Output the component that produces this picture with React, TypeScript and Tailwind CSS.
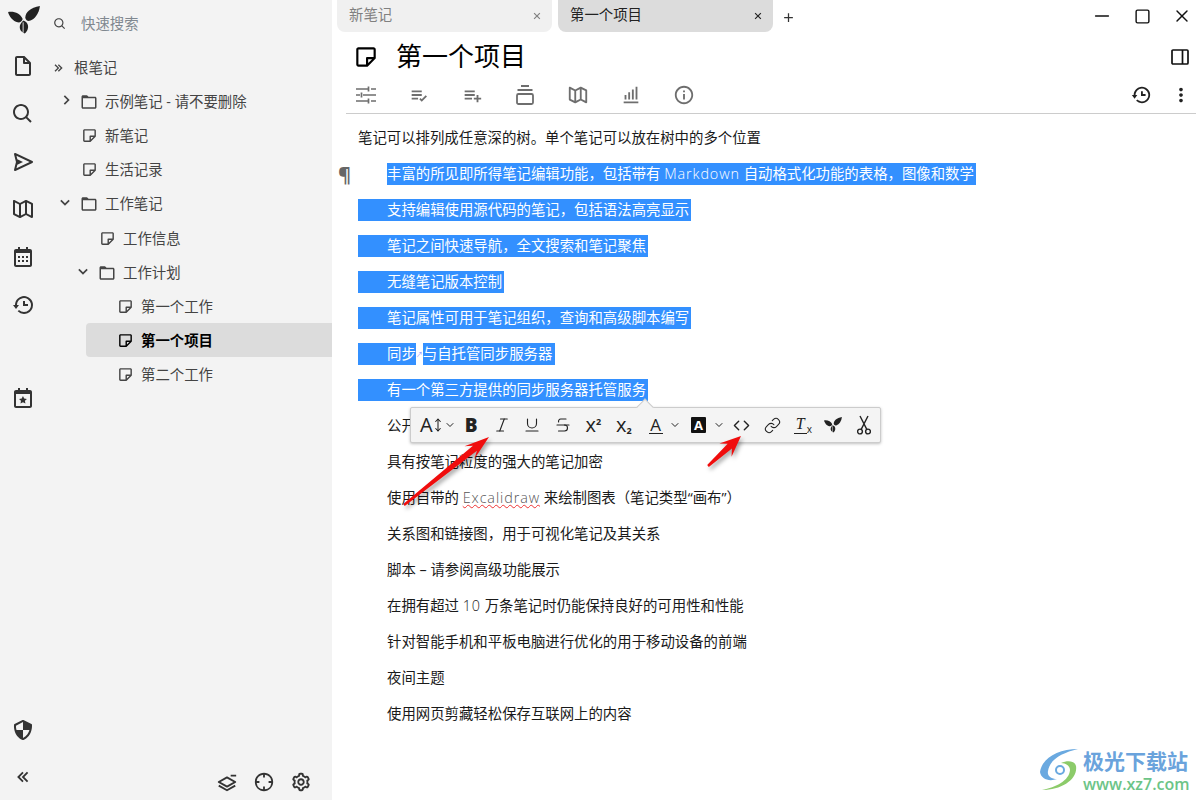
import React from 'react';
import {
  BiFileBlank, BiSearch, BiSend, BiMapAlt, BiCalendar, BiHistory, BiCalendarStar, BiShieldQuarter,
  BiChevronsLeft, BiChevronsRight, BiChevronRight, BiChevronDown, BiFolder, BiNote, BiLayerMinus,
  BiCrosshair, BiCog, BiListCheck, BiListPlus, BiBarChartAlt, BiInfoCircle, BiDotsVerticalRounded,
  BiX, BiPlus,
} from 'react-icons/bi';
import {
  Italic, Underline, Strikethrough, Code, Link,
  ChevronDown, MoveVertical, Minus, Square, X,
} from 'lucide-react';

const font = { fontFamily: '"Open Sans", "Noto Sans CJK SC", sans-serif' };

const Leaf = ({ size = 38 }: { size?: number }) => (
  <svg width={size} height={size * 0.86} viewBox="0 0 37 32" fill="currentColor">
    <path d="M17 15C14 9 8 6 0 7c1 5 6 11 11 12 3 .6 5-1 6-4z" />
    <path d="M20 14c0-7 6-12 17-14-1 9-6 15-11 17-3 1-5 0-6-3z" />
    <path d="M18 17c-4 3-6 8-3 12l4 3c3-2 5-6 4-10-1-3-3-4-5-5z" />
    <path d="M17.5 19v12" stroke="#f3f3f3" strokeWidth="1" />
  </svg>
);

const tree = [
  { label: '示例笔记 - 请不要删除', pad: 'pl-[81px]', chevron: 'right', icon: 'folder' },
  { label: '新笔记', pad: 'pl-[81px]', icon: 'note' },
  { label: '生活记录', pad: 'pl-[81px]', icon: 'note' },
  { label: '工作笔记', pad: 'pl-[81px]', chevron: 'down', icon: 'folder', tall: true },
  { label: '工作信息', pad: 'pl-[99px]', icon: 'note' },
  { label: '工作计划', pad: 'pl-[99px]', chevron: 'down', icon: 'folder' },
  { label: '第一个工作', pad: 'pl-[117px]', icon: 'note' },
  { label: '第一个项目', pad: 'pl-[117px]', icon: 'note', active: true },
  { label: '第二个工作', pad: 'pl-[117px]', icon: 'note' },
];

const railIcons = [BiFileBlank, BiSearch, BiSend, BiMapAlt, BiCalendar, BiHistory];

const TuneIcon = () => (
  <svg width="22" height="22" viewBox="0 0 22 22" fill="none" stroke="currentColor" strokeWidth="1.7">
    <path d="M1 5h12M16 5h5M13.5 2.5v5M1 11h4M8 11h13M6.5 8.5v5M1 17h12M16 17h5M13.5 14.5v5" />
  </svg>
);

const DockIcon = () => (
  <svg width="22" height="22" viewBox="0 0 22 22" fill="none" stroke="currentColor" strokeWidth="1.8">
    <path d="M7 2h8M3.5 6h15" />
    <rect x="3" y="10" width="16" height="10" rx="1.5" />
  </svg>
);

const toolIcons = [TuneIcon, BiListCheck, BiListPlus, DockIcon, BiMapAlt, BiBarChartAlt, BiInfoCircle];

const Latin = ({ children }: { children: React.ReactNode }) => (
  <span className="font-light tracking-[0.9px]">{children}</span>
);

const selected: React.ReactNode[] = [
  <>丰富的所见即所得笔记编辑功能，包括带有 <Latin>Markdown</Latin> 自动格式化功能的表格，图像和数学</>,
  '支持编辑使用源代码的笔记，包括语法高亮显示',
  '笔记之间快速导航，全文搜索和笔记聚焦',
  '无缝笔记版本控制',
  '笔记属性可用于笔记组织，查询和高级脚本编写',
];

const plain: React.ReactNode[] = [
  '公开',
  '具有按笔记粒度的强大的笔记加密',
  <span>
    使用自带的{' '}
    <span className="underline decoration-wavy decoration-[#e33] decoration-1 text-[#555] font-light tracking-[0.9px]">Excalidraw</span>
    {' '}来绘制图表（笔记类型“画布”）
  </span>,
  '关系图和链接图，用于可视化笔记及其关系',
  '脚本 – 请参阅高级功能展示',
  <span>在拥有超过 <Latin>10</Latin> 万条笔记时仍能保持良好的可用性和性能</span>,
  '针对智能手机和平板电脑进行优化的用于移动设备的前端',
  '夜间主题',
  '使用网页剪藏轻松保存互联网上的内容',
];

const Sidebar = () => (
  <aside className="w-[332px] shrink-0 h-full bg-[#f3f3f3] flex text-[#444]">
    <div className="w-[47px] shrink-0 flex flex-col items-center pt-[6px] pb-[12px]">
      <div className="text-[#222] h-[36px]"><Leaf size={32} /></div>
      <div className="flex flex-col gap-[23.8px] mt-[12px] text-[#333] -translate-x-[1px]">
        {railIcons.map((Icon, i) => <Icon key={i} size={24} />)}
      </div>
      <BiCalendarStar size={24} className="mt-[69px] text-[#333] -translate-x-[1px]" />
      <BiShieldQuarter size={24} className="mt-auto text-[#333] -translate-x-[1px]" />
      <BiChevronsLeft size={22} className="mt-[24px] text-[#333] -translate-x-[1px]" />
    </div>
    <div className="flex-1 flex flex-col">
      <div className="h-[48px] flex items-center pl-[6px] gap-[14px]">
        <BiSearch size={14} className="text-[#444]" />
        <span className="text-[14.4px] text-[#808890]">快速搜索</span>
      </div>
      <div className="flex items-center h-[34px] mt-[3px] pl-[4px] text-[14.4px]">
        <BiChevronsRight size={16} />
        <span className="ml-[7px]">根笔记</span>
      </div>
      <div className="-ml-[47px] relative">
        {tree.map((row, i) => (
          <div
            key={i}
            className={`flex items-center text-[14.4px] relative ${row.tall ? 'h-[35px] pb-[1px]' : 'h-[34px]'} ${row.pad} ${
              row.active ? 'font-bold text-black' : ''
            }`}
          >
            {row.active && <div className="absolute left-[86px] right-0 top-[-1px] bottom-[1px] bg-[#dcdcdc] rounded-l-[4px]" />}
            <span className="relative flex items-center">
              {row.chevron === 'right' && <BiChevronRight size={20} className="absolute -left-[25px] top-[-1px]" />}
              {row.chevron === 'down' && <BiChevronDown size={20} className="absolute -left-[26px] top-[-1px]" />}
              {row.icon === 'folder' ? <BiFolder size={18} className="ml-[-1px]" /> : <BiNote size={17} />}
              <span className="ml-[7px]">{row.label}</span>
            </span>
          </div>
        ))}
      </div>
      <div className="mt-auto pb-[7px] flex justify-end pr-[20px] gap-[15px] text-[#333]">
        <BiLayerMinus size={22} />
        <BiCrosshair size={22} />
        <BiCog size={22} />
      </div>
    </div>
  </aside>
);

const Tabs = () => (
  <div className="h-[32px] flex items-stretch pl-[5px] relative">
    <div className="w-[215px] bg-[#f0f0f0] rounded-b-[8px] flex items-center justify-between pl-[12px] pr-[8px] text-[14.4px] text-[#808080]">
      <span className="pb-[3px]">新笔记</span>
      <BiX size={14} />
    </div>
    <div className="ml-[6px] w-[215px] bg-[#dcdcdc] rounded-b-[8px] flex items-center justify-between pl-[12px] pr-[8px] text-[14.4px] text-[#222]">
      <span className="pb-[3px]">第一个项目</span>
      <BiX size={14} />
    </div>
    <BiPlus size={15} className="ml-[8px] mt-[10px] text-[#333]" />
    <div className="ml-auto -mr-[2px] flex items-center text-[#111]">
      <div className="w-[40px] flex justify-center"><Minus size={22} strokeWidth={1.5} /></div>
      <div className="w-[40px] flex justify-center"><Square size={17} strokeWidth={2} /></div>
      <div className="w-[40px] flex justify-center"><X size={20} strokeWidth={1.7} /></div>
    </div>
  </div>
);

const Selected = ({ children, first }: { children: React.ReactNode; first?: boolean }) => (
  <div className={`h-[36px] flex items-center ${first ? 'pl-[29px]' : ''}`}>
    <span className={`bg-[#3390ff] text-white h-[22px] flex items-center whitespace-pre pr-[2px] ${first ? '' : 'pl-[29px]'}`}>
      <span>{children}</span>
    </span>
  </div>
);

const Content = () => (
  <main className="flex-1 min-w-0 h-full flex flex-col">
    <Tabs />
    <div className="h-[50px] flex items-center pl-[21px] pr-[11px]">
      <BiNote size={26} className="text-black" />
      <h1 className="ml-[17px] text-[26px] text-black pb-[1px]">第一个项目</h1>
      <svg width="18" height="16" viewBox="0 0 18 16" fill="none" stroke="#111" strokeWidth="1.7" className="ml-auto">
        <rect x="1" y="1" width="16" height="14" rx="1" />
        <path d="M11.5 1v14" />
      </svg>
    </div>
    <div className="h-[29px] pt-[2px] ml-[14px] mr-[4px] border-b border-[#ccc] box-content flex items-start text-[#6e6e6e]">
      <div className="flex items-center pl-[8px]">
        {toolIcons.map((Icon, i) => (
          <div key={i} className="w-[53px] pl-[1px] flex justify-start">
            <Icon size={22} />
          </div>
        ))}
      </div>
      <div className="ml-auto flex items-center gap-[18px] pr-[4px] text-[#222]">
        <BiHistory size={22} />
        <BiDotsVerticalRounded size={22} />
      </div>
    </div>
    <div className="relative flex-1 pl-[26px] pt-[6px] text-[14.4px] text-[#1a1a1a]">
      <div className="h-[36px] flex items-center">笔记可以排列成任意深的树。单个笔记可以放在树中的多个位置</div>
      <span className="absolute left-[6px] top-[46px] text-[20px] font-bold text-[#666]">¶</span>
      {selected.map((t, i) => <Selected key={i} first={i === 0}>{t}</Selected>)}
      <div className="h-[36px] flex items-center">
        <span className="bg-[#3390ff] text-white h-[22px] flex items-center pl-[29px]">同步</span>
        <span className="w-[7px] text-center text-[7px] leading-none text-[#8a8aff]">↗</span>
        <span className="bg-[#3390ff] text-white h-[22px] flex items-center pr-[3px]">与自托管同步服务器</span>
      </div>
      <Selected>有一个第三方提供的同步服务器托管服务</Selected>
      {plain.map((t, i) => (
        <div key={i} className="h-[36px] flex items-center pl-[29px] whitespace-pre">
          {t}
        </div>
      ))}
    </div>
  </main>
);

const Cell = ({ children }: { children: React.ReactNode }) => (
  <div className="w-[30.5px] shrink-0 flex justify-center items-center">{children}</div>
);

const Balloon = () => (
  <div className="absolute left-[410px] top-[407px] w-[471px] h-[36px] bg-[#f4f4f4] border border-[#ccc] rounded-[2px] shadow-[0_1px_3px_rgba(0,0,0,.25)] flex items-center pl-[9px] text-[#222]">
    <div className="absolute -top-[7px] left-[228px] w-[12px] h-[12px] rotate-45 bg-[#f4f4f4] border-l border-t border-[#ccc]" />
    <span className="relative flex items-center text-[20px] leading-none w-[36px] shrink-0">
      A
      <MoveVertical size={14} strokeWidth={1.8} className="-ml-[2px] -mr-[1px] shrink-0" />
      <ChevronDown size={12} strokeWidth={2} className="shrink-0" />
    </span>
    <Cell><span className="text-[19px] font-extrabold leading-none">B</span></Cell>
    <Cell><Italic size={18} strokeWidth={1.5} /></Cell>
    <Cell><Underline size={18} strokeWidth={1.5} /></Cell>
    <Cell><Strikethrough size={18} strokeWidth={1.5} /></Cell>
    <Cell>
      <span className="flex items-start leading-none">
        <span className="text-[20px] leading-[20px]">x</span>
        <span className="text-[9px] font-bold leading-[10px] mt-[2px]">2</span>
      </span>
    </Cell>
    <Cell>
      <span className="flex items-end leading-none">
        <span className="text-[20px] leading-[20px]">x</span>
        <span className="text-[9px] font-bold leading-[10px] -mb-[1px]">2</span>
      </span>
    </Cell>
    <span className="w-[46px] pl-[9.5px] flex items-center shrink-0">
      <span className="border-b border-[#222] text-[17px] leading-[17px] w-[14px] text-center">A</span>
      <ChevronDown size={12} strokeWidth={2} className="ml-[6px] shrink-0" />
    </span>
    <span className="w-[41.5px] pl-[6px] flex items-center shrink-0">
      <span className="bg-[#111] text-white text-[13px] font-bold leading-[16px] w-[15px] text-center rounded-[1px]">A</span>
      <ChevronDown size={12} strokeWidth={2} className="ml-[6.5px] shrink-0" />
    </span>
    <Cell><Code size={17} strokeWidth={2} /></Cell>
    <Cell><Link size={17} strokeWidth={1.5} /></Cell>
    <Cell>
      <span className="relative w-[18px] h-[19px] block">
        <span className="absolute left-0 top-[-1px] w-[13px] border-b border-[#222] italic text-[16px] leading-[18px] text-center" style={{ fontFamily: '"Liberation Serif", serif' }}>T</span>
        <span className="absolute left-[13px] top-[8px] text-[10px] leading-[10px]">x</span>
      </span>
    </Cell>
    <Cell><Leaf size={18} /></Cell>
    <Cell>
      <svg width="14" height="20" viewBox="0 0 14 20" fill="none" stroke="currentColor" strokeWidth="1.4">
        <circle cx="3" cy="16.5" r="2.4" />
        <circle cx="11" cy="16.5" r="2.4" />
        <path d="M4.2 14.4 11 1M9.8 14.4 3 1" />
      </svg>
    </Cell>
  </div>
);

const Arrow = ({ x1, y1, x2, y2, head, barb }: { x1: number; y1: number; x2: number; y2: number; head: number; barb: number }) => {
  const a = Math.atan2(y2 - y1, x2 - x1);
  const ux = Math.cos(a);
  const uy = Math.sin(a);
  const nx = -uy;
  const ny = ux;
  const at = (along: number, side: number) => `${x2 - ux * along + nx * side},${y2 - uy * along + ny * side}`;
  const tail = Math.hypot(x2 - x1, y2 - y1);
  const points = [
    at(tail, 1.2),
    at(head * 0.72, 3.2),
    at(head, barb),
    `${x2},${y2}`,
    at(head, -barb),
    at(head * 0.72, -3.2),
    at(tail, -1.2),
  ].join(' ');
  return <polygon points={points} fill="#f00d0d" />;
};

const Watermark = () => (
  <div className="absolute right-[6px] bottom-[1px] w-[158px] h-[56px] bg-white/90 flex items-center">
    <svg width="44" height="50" viewBox="0 0 44 50" fill="none" className="shrink-0 -mt-[4px]">
      <path d="M4 28C6 14 22 5 42 5 26 9 14 15 12 27c-1 5 3 8 9 8-8 3-16 0-17-7z" fill="#6aa9e0" />
      <path d="M40 22c2 13-14 24-34 24 14-3 27-9 28-20 0-4-4-7-9-7 7-3 14-2 15 3z" fill="#8ccb6a" />
      <circle cx="24" cy="26" r="4" stroke="#6aa9e0" strokeWidth="2" />
    </svg>
    <div className="flex flex-col ml-[3px]">
      <span className="text-[21px] font-bold leading-[24px] text-[#6aa3dc]">极光下载站</span>
      <span className="mt-[2px] text-[16px] leading-[18px] font-semibold text-[#6cc487]">www.xz7.com</span>
    </div>
  </div>
);

export default function App() {
  return (
    <div className="w-[1200px] h-[800px] relative overflow-hidden bg-white flex" style={font}>
      <Sidebar />
      <Content />
      <Balloon />
      <svg className="absolute inset-0 pointer-events-none drop-shadow-[2px_3px_2px_rgba(0,0,0,0.35)]" width="1200" height="800">
        <Arrow x1={404} y1={505} x2={489} y2={437} head={25} barb={8} />
        <Arrow x1={708} y1={466} x2={741} y2={436} head={21} barb={9} />
      </svg>
      <Watermark />
    </div>
  );
}
